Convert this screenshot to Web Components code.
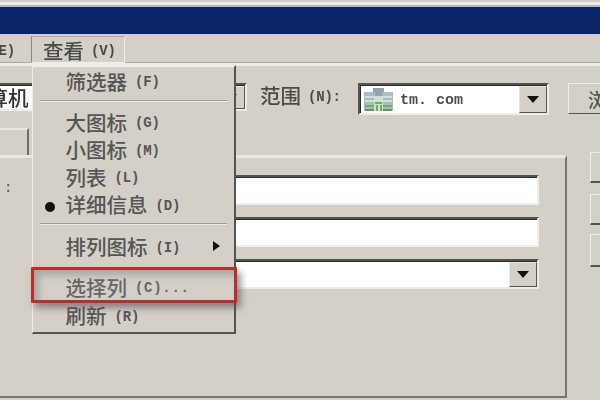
<!DOCTYPE html>
<html lang="zh"><head><meta charset="utf-8"><title>查看</title>
<style>html,body{margin:0;padding:0;background:#d4d0c8;overflow:hidden}</style></head>
<body>
<x-window>
  <x-menubar slot="menubar"></x-menubar>
  <x-toolbar slot="toolbar"></x-toolbar>
  <x-body slot="body"></x-body>
  <x-menu slot="overlay"></x-menu>
</x-window>
<script>
const FONT = `"Noto Sans CJK SC","Liberation Sans",sans-serif`;
const MONO = `"Liberation Mono","Noto Sans CJK SC",monospace`;
function def(name, html, init){
  customElements.define(name, class extends HTMLElement{
    constructor(){super();this.attachShadow({mode:'open'}).innerHTML=html;}
    connectedCallback(){ if(init) init(this); }
  });
}
const lat = `.l{font-family:${MONO};font-size:14px;font-weight:700;margin:3px 0 0 7px;letter-spacing:-.2px}`;
const sunkenCss = `border:2px solid;border-color:#55534f #efede8 #efede8 #55534f;box-shadow:inset 1px 1px 0 #2c2b2a;box-sizing:border-box;background:#fff;`;

def('x-window', `<style>
:host{display:block;width:600px;height:400px;overflow:hidden;position:relative;background:#d4d0c8}
.w{display:flex;flex-direction:column;height:400px;filter:blur(.7px)}
.strip{height:7px;flex:none;background:linear-gradient(#cfccc4 0 2px,#ecebe6 2px 5px,#b9b8b8 5px)}
.title{height:27px;flex:none;background:#0a246a}
.ov{position:absolute;inset:0}
.red{position:absolute;left:31px;top:267px;width:206px;height:36px;box-sizing:border-box;border:3.5px solid #bd2a30;border-radius:1px;box-shadow:4px 5px 7px rgba(70,70,70,.55),inset 5px 5px 7px rgba(90,90,90,.35)}
</style><div class="w"><div class="strip"></div><div class="title"></div>
<slot name="menubar"></slot><slot name="toolbar"></slot><slot name="body"></slot>
<div class="ov"><slot name="overlay"></slot><div class="red"></div></div></div>`);

def('x-menubar', `<style>
:host{display:flex;flex:none;height:32px;box-sizing:border-box;padding-top:2px;border-bottom:3px solid;border-color:#efede8;box-shadow:0 -1px 0 #aaa8a2 inset;color:#4a4a4a;font:500 20.5px ${FONT};margin-left:-10px;overflow:hidden}
.i{display:flex;align-items:center;height:27px;white-space:nowrap}
.a{width:25px;justify-content:flex-end;margin-right:16px}
.b{width:94px;padding-left:11px;box-sizing:border-box;border-left:1px solid #8b8983;border-right:1px solid #efede8;border-bottom:1px solid #efede8;border-top:1px solid #a8a69f}
${lat}
</style><div class="i a"><span class="l" style="margin-left:0">E)</span></div><div class="i b">查看<span class="l">(V)</span></div>`);

def('x-field', `<style>
:host{display:flex;box-sizing:border-box;${sunkenCss}color:#3e3e3e;overflow:hidden;align-items:center;position:relative}
.g{flex:1;min-width:0;display:flex;align-items:center;white-space:nowrap;overflow:hidden}
.btn{flex:none;width:28px;align-self:stretch;margin:1px 0 0 0;background:#d4d0c8;box-sizing:border-box;border:1px solid;border-color:#e8e6e0 #55534f #55534f #e8e6e0;display:flex;align-items:center;justify-content:center}
.btn i{width:0;height:0;border:6px solid transparent;border-top:7px solid #111;border-bottom:0;display:block}
</style><div class="g"><slot></slot></div><div class="btn" part="btn"><i></i></div>`, el=>{
  if(!el.hasAttribute('combo')) el.shadowRoot.querySelector('.btn').style.display='none';
});

def('x-toolbar', `<style>
:host{display:flex;flex:none;height:62px;box-sizing:border-box;padding-top:17px;align-items:flex-start;color:#4a4a4a;font:500 20.5px ${FONT};white-space:nowrap}
x-field{flex:none}
.first{width:282px;height:28px;margin-left:-35px;color:#333}
.lab{margin-left:13px;height:24px;display:flex;align-items:center;width:98px;flex:none}
.dom{width:191px;height:32px;font:700 15px ${MONO};color:#4d4d4d}
.ic{margin:0 7px 0 4px;flex:none}
.tx{padding-top:3px}
.brow{flex:none;margin-left:19px;width:60px;height:31px;box-sizing:border-box;background:#d4d0c8;border:1px solid;border-color:#efede8 #55534f #55534f #efede8;padding-left:19px;display:flex;align-items:center;color:#555}
${lat}
</style>
<x-field class="first" combo>计算机</x-field>
<div class="lab">范围<span class="l">(N):</span></div>
<x-field class="dom" combo><svg class="ic" width="29" height="25" viewBox="0 0 29 25"><rect x="9" y="1" width="11" height="8" fill="#8fa4ad"/><rect x="0" y="5" width="11" height="19" fill="#a9bcc0"/><rect x="18" y="5" width="11" height="19" fill="#a9bcc0"/><rect x="10" y="9" width="9" height="15" fill="#cfe0d8"/><path d="M1 10h9M1 14h9M19 10h9M19 14h9" stroke="#dfe9ea" stroke-width="1.5"/><path d="M1 19h9M19 19h9M11 16h7M13 24v-6M17 24v-6" stroke="#74ad62" stroke-width="2"/><path d="M1 23h9M19 23h9" stroke="#5e9a55" stroke-width="2"/></svg><span class="tx">tm. com</span></x-field>
<div class="brow">浏览</div>`);

def('x-panel', `<style>
:host{display:flex;flex-direction:column;gap:12px;flex:none;width:579px;height:243px;box-sizing:border-box;margin-left:-12px;padding:17px 26px 0 80px;border:solid;border-width:3px 2px 2px 0;border-color:#e9e7e2 #77756f #77756f #e9e7e2;position:relative}
x-field{height:30px}
.c{position:absolute;left:16px;top:22px;font:700 14px ${MONO};color:#666}
</style><span class="c">:</span><x-field></x-field><x-field></x-field><x-field combo></x-field>`);

def('x-body', `<style>
:host{display:flex;flex:1;min-height:0;overflow:hidden}
.left{flex:none;width:567px;display:flex;flex-direction:column}
.tabs{height:27px;flex:none;display:flex}
.tab{width:29px;height:27px;box-sizing:border-box;border:solid;border-width:2px 2px 0 0;border-color:#e9e7e2 #6e6c66 transparent transparent}
.right{flex:none;margin-left:23px;padding-top:24px;display:flex;flex-direction:column}
.b{width:40px;box-sizing:border-box;border:1px solid;border-color:#efede8 #55534f #55534f #efede8;border-bottom-width:2px;background:#d4d0c8}
</style><div class="left"><div class="tabs"><div class="tab"></div></div><x-panel></x-panel></div>
<div class="right"><div class="b" style="height:31px;margin-bottom:11px"></div><div class="b" style="height:31px;margin-bottom:9px"></div><div class="b" style="height:33px"></div></div>`);

def('x-item', `<style>
:host{display:flex;align-items:center;height:27.5px;box-sizing:border-box;padding-bottom:6px;flex:none;white-space:nowrap}
.chk{width:32.5px;flex:none;display:flex;justify-content:center;padding-left:2px;box-sizing:border-box}
.chk i{width:10px;height:10px;border-radius:50%;background:#111;display:none;margin-top:6px}
:host([checked]) .chk i{display:block}
.t{flex:1;display:flex;align-items:center}
.ar{width:0;height:0;border:5.5px solid transparent;border-left:7px solid #111;border-right:0;margin-right:14px;display:none}
:host([sub]) .ar{display:block}
::slotted(span){font:700 14px ${MONO};margin:3px 0 0 8px;letter-spacing:-.2px}
</style><div class="chk"><i></i></div><div class="t"><slot></slot></div><div class="ar"></div>`);

def('x-sep', `<style>:host{display:block;flex:none;height:2px;margin:var(--mt,4px) 7px var(--mb,4px);background:linear-gradient(#9f9d96 0 1px,#efede8 1px)}</style>`);

def('x-menu', `<style>
:host{position:absolute;left:32px;top:65px;width:204px;height:269px;box-sizing:border-box;display:flex;flex-direction:column;padding:3px 0 0;background:#d4d0c8;border:solid;border-width:2px 2px 2px 1px;border-color:#efede8 #55534f #55534f #efede8;color:#555;font:500 20.5px ${FONT}}
</style>
<x-item>筛选器<span>(F)</span></x-item>
<x-sep style="--mt:2px;--mb:3px"></x-sep>
<x-item style="margin-top:6.5px">大图标<span>(G)</span></x-item>
<x-item>小图标<span>(M)</span></x-item>
<x-item>列表<span>(L)</span></x-item>
<x-item checked>详细信息<span>(D)</span></x-item>
<x-sep style="--mt:1.5px;--mb:7px"></x-sep>
<x-item sub style="margin-top:4px">排列图标<span>(I)</span></x-item>
<x-sep style="--mt:5px;--mb:5px"></x-sep>
<x-item style="margin-top:1px;color:#666">选择列<span style="letter-spacing:.7px">(C)...</span></x-item>
<x-item style="margin-top:1px">刷新<span>(R)</span></x-item>`);
</script>
</body></html>
